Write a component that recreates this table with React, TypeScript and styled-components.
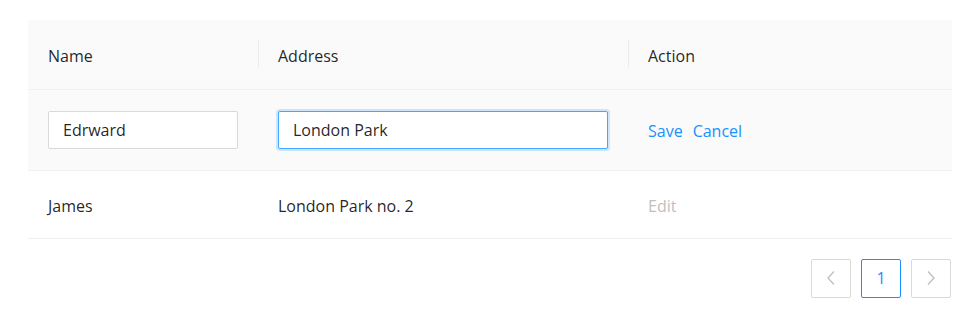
import React from "react";
import styled, { createGlobalStyle } from "styled-components";

const Global = createGlobalStyle`
  body {
    margin: 0;
    background: #fff;
    font-family: "Open Sans", "Noto Sans", sans-serif;
    color: rgba(0, 0, 0, 0.87);
  }
`;

const Page = styled.div`
  padding: 20px 28px;
`;

const Table = styled.table`
  width: 100%;
  border-collapse: collapse;
  table-layout: fixed;
  font-size: 16px;
`;

const Th = styled.th<{ $w?: number; $sep?: boolean }>`
  box-sizing: border-box;
  width: ${(p) => (p.$w ? `${p.$w}px` : "auto")};
  height: 69px;
  padding: 3px 20px 0;
  text-align: left;
  font-weight: 400;
  background: #fafafa;
  border-bottom: 1px solid #f0f0f0;
  position: relative;
  &::before {
    content: "";
    display: ${(p) => (p.$sep ? "block" : "none")};
    position: absolute;
    left: 0;
    top: 50%;
    width: 1px;
    height: 28px;
    transform: translateY(-50%);
    background: #ececec;
  }
`;

const Row = styled.tr<{ $editing?: boolean }>`
  background: ${(p) => (p.$editing ? "#fafafa" : "#fff")};
`;

const Td = styled.td<{ $h: number; $text?: boolean }>`
  box-sizing: border-box;
  height: ${(p) => p.$h}px;
  padding: ${(p) => (p.$text ? "3px 20px 0" : "0 20px")};
  border-bottom: 1px solid #f0f0f0;
  vertical-align: middle;
`;

const Input = styled.input<{ $focused?: boolean }>`
  box-sizing: border-box;
  width: 100%;
  height: 38px;
  padding: 0 14px;
  font: inherit;
  font-size: 16px;
  color: rgba(0, 0, 0, 0.87);
  background: #fff;
  border: 1px solid ${(p) => (p.$focused ? "#40a9ff" : "#d9d9d9")};
  border-radius: 2px;
  outline: none;
  box-shadow: ${(p) => (p.$focused ? "0 0 0 2px rgba(24, 144, 255, 0.2)" : "none")};
`;

const Actions = styled.div`
  display: flex;
  gap: 10px;
`;

const Link = styled.a<{ $disabled?: boolean }>`
  color: ${(p) => (p.$disabled ? "#bfbfbf" : "#1890ff")};
  text-decoration: none;
  cursor: ${(p) => (p.$disabled ? "not-allowed" : "pointer")};
`;

const Pager = styled.div`
  display: flex;
  justify-content: flex-end;
  gap: 10px;
  margin-top: 20px;
  padding-right: 1px;
`;

const PageButton = styled.button<{ $active?: boolean }>`
  box-sizing: border-box;
  width: 40px;
  height: 39px;
  display: flex;
  align-items: center;
  justify-content: center;
  padding: 0;
  background: #fff;
  border: 1px solid ${(p) => (p.$active ? "#1890ff" : "#d9d9d9")};
  border-radius: 2px;
  color: ${(p) => (p.$active ? "#1890ff" : "#bfbfbf")};
  font-family: inherit;
  font-size: 16px;
`;

const Chevron = ({ dir }: { dir: "left" | "right" }) => (
  <svg width="10" height="16" viewBox="0 0 10 16" fill="none">
    <path
      d={dir === "left" ? "M8 1.5 L2 8 L8 14.5" : "M2 1.5 L8 8 L2 14.5"}
      stroke="currentColor"
      strokeWidth="1.3"
    />
  </svg>
);

export default function App() {
  return (
    <>
      <Global />
      <Page>
        <Table>
          <thead>
            <tr>
              <Th $w={230}>Name</Th>
              <Th $w={370} $sep>
                Address
              </Th>
              <Th $sep>Action</Th>
            </tr>
          </thead>
          <tbody>
            <Row $editing>
              <Td $h={81}>
                <Input defaultValue="Edrward" />
              </Td>
              <Td $h={81}>
                <Input $focused defaultValue="London Park" />
              </Td>
              <Td $h={81} $text>
                <Actions>
                  <Link>Save</Link>
                  <Link>Cancel</Link>
                </Actions>
              </Td>
            </Row>
            <Row>
              <Td $h={68} $text>
                James
              </Td>
              <Td $h={68} $text>
                London Park no. 2
              </Td>
              <Td $h={68} $text>
                <Link $disabled>Edit</Link>
              </Td>
            </Row>
          </tbody>
        </Table>
        <Pager>
          <PageButton>
            <Chevron dir="left" />
          </PageButton>
          <PageButton $active>1</PageButton>
          <PageButton>
            <Chevron dir="right" />
          </PageButton>
        </Pager>
      </Page>
    </>
  );
}
